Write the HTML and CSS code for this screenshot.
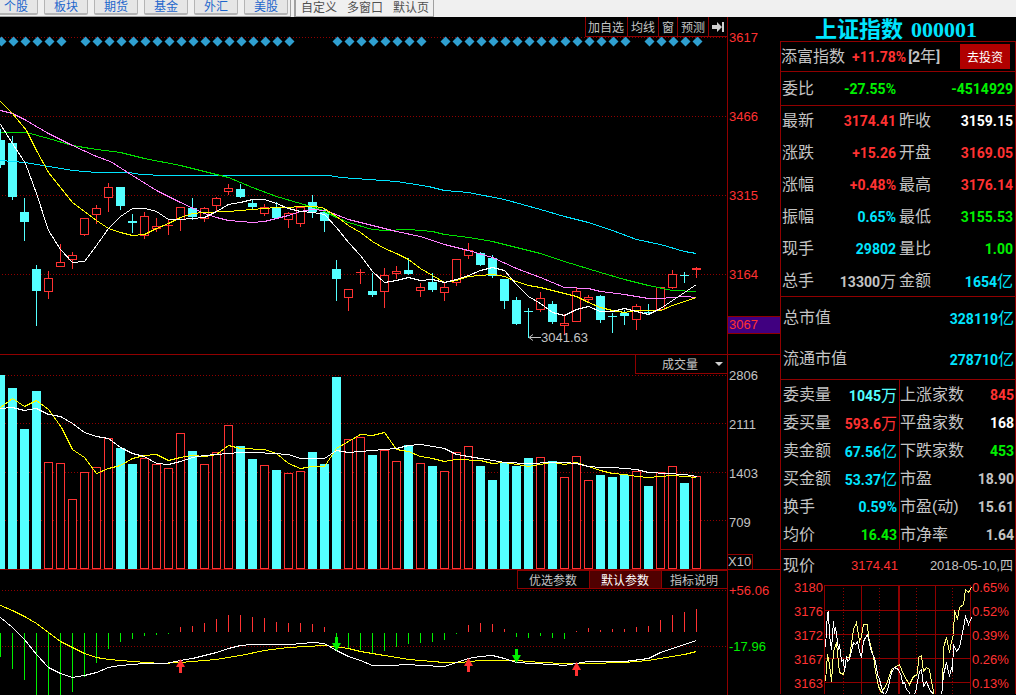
FILE: index.html
```html
<!DOCTYPE html>
<html lang="zh-CN">
<head>
<meta charset="utf-8">
<meta name="viewport" content="width=device-width, initial-scale=1">
<title>上证指数 000001</title>
<link rel="stylesheet" href="styles.css">
</head>
<body>
<header class="topbar">
  <nav class="markets">
    <button type="button">个股</button>
    <button type="button">板块</button>
    <button type="button">期货</button>
    <button type="button">基金</button>
    <button type="button">外汇</button>
    <button type="button">美股</button>
  </nav>
  <nav class="views">
    <a href="#custom">自定义</a>
    <a href="#multi">多窗口</a>
    <a href="#default">默认页</a>
  </nav>
</header>

<main class="workspace">
  <div class="charts">
    <section class="panel" aria-label="K线">
      <svg class="plot plot-price" id="price" viewBox="0 17 727 337" preserveAspectRatio="none"></svg>
      <div class="tools">
        <button type="button">加自选</button>
        <button type="button">均线</button>
        <button type="button">窗</button>
        <button type="button">预测</button>
        <button type="button" aria-label="移到最后">
          <svg class="tool-icon" viewBox="0 0 12 12"><path d="M0 4h5V1l5 5-5 5V8H0zM10 1h2v10h-2z" fill="#d0d0d0"/></svg>
        </button>
      </div>
      <ul class="axis axis-price">
        <li>3617</li>
        <li>3466</li>
        <li>3315</li>
        <li>3164</li>
        <li class="current">3067</li>
      </ul>
    </section>

    <section class="panel" aria-label="成交量">
      <svg class="plot plot-volume" id="volume" viewBox="0 355 727 214" preserveAspectRatio="none"></svg>
      <div class="indicator">
        <select aria-label="指标"><option>成交量</option></select>
        <svg class="caret" viewBox="0 0 8 4"><path d="M0 0h8L4 4z" fill="#d0d0d0"/></svg>
      </div>
      <div class="axis axis-volume">
        <ul>
          <li>2806</li>
          <li>2111</li>
          <li>1403</li>
          <li>709</li>
        </ul>
        <span class="unit">X10</span>
      </div>
    </section>

    <section class="panel panel-last" aria-label="MACD">
      <svg class="plot plot-macd" id="macd" viewBox="0 570 727 125" preserveAspectRatio="none"></svg>
      <div class="tabs">
        <button type="button">优选参数</button>
        <button type="button" class="active">默认参数</button>
        <button type="button">指标说明</button>
      </div>
      <ul class="axis axis-macd">
        <li>+56.06</li>
        <li class="down">-17.96</li>
      </ul>
    </section>
  </div>

  <aside class="sidebar">
    <h1><span>上证指数</span><span>000001</span></h1>
    <div class="details">
      <div class="fund">
        <span>添富指数</span>
        <b class="up">+11.78%</b>
        <span class="term"><b>[2</b>年<b>]</b></span>
        <button type="button">去投资</button>
      </div>

      <dl class="quotes ratio">
        <div><dt>委比</dt><dd class="down">-27.55%</dd></div>
        <div class="only"><dd class="down">-4514929</dd></div>
      </dl>

      <dl class="quotes">
        <div><dt>最新</dt><dd class="up">3174.41</dd></div>
        <div><dt>昨收</dt><dd class="even">3159.15</dd></div>
        <div><dt>涨跌</dt><dd class="up">+15.26</dd></div>
        <div><dt>开盘</dt><dd class="up">3169.05</dd></div>
        <div><dt>涨幅</dt><dd class="up">+0.48%</dd></div>
        <div><dt>最高</dt><dd class="up">3176.14</dd></div>
        <div><dt>振幅</dt><dd class="info">0.65%</dd></div>
        <div><dt>最低</dt><dd class="down">3155.53</dd></div>
        <div><dt>现手</dt><dd class="info">29802</dd></div>
        <div><dt>量比</dt><dd class="down">1.00</dd></div>
        <div><dt>总手</dt><dd>13300<i>万</i></dd></div>
        <div><dt>金额</dt><dd class="info">1654<i>亿</i></dd></div>
      </dl>

      <dl class="caps">
        <div><dt>总市值</dt><dd class="info">328119<i>亿</i></dd></div>
        <div><dt>流通市值</dt><dd class="info">278710<i>亿</i></dd></div>
      </dl>

      <dl class="stats">
        <div><dt>委卖量</dt><dd class="sell">1045<i>万</i></dd></div>
        <div><dt>上涨家数</dt><dd class="up">845</dd></div>
        <div><dt>委买量</dt><dd class="up">593.6<i>万</i></dd></div>
        <div><dt>平盘家数</dt><dd class="even">168</dd></div>
        <div><dt>卖金额</dt><dd class="info">67.56<i>亿</i></dd></div>
        <div><dt>下跌家数</dt><dd class="down">453</dd></div>
        <div><dt>买金额</dt><dd class="info">53.37<i>亿</i></dd></div>
        <div><dt>市盈</dt><dd>18.90</dd></div>
        <div><dt>换手</dt><dd class="info">0.59%</dd></div>
        <div><dt>市盈(动)</dt><dd>15.61</dd></div>
        <div><dt>均价</dt><dd class="down">16.43</dd></div>
        <div><dt>市净率</dt><dd>1.64</dd></div>
      </dl>

      <div class="session">
        <span class="session-name">现价</span>
        <span class="session-price">3174.41</span>
        <time datetime="2018-05-10">2018-05-10,四</time>
      </div>

      <div class="intraday">
        <ul class="levels">
          <li>3180</li><li>3176</li><li>3172</li><li>3167</li><li>3163</li>
        </ul>
        <svg class="mini" id="mini" viewBox="824 581 148 114" preserveAspectRatio="none"></svg>
        <ul class="levels percents">
          <li>0.65%</li><li>0.52%</li><li>0.39%</li><li>0.26%</li><li>0.13%</li>
        </ul>
      </div>
    </div>
  </aside>
</main>
<script src="charts.js"></script>
</body>
</html>
```

FILE: styles.css
```css
* {
  box-sizing: border-box;
}

body {
  margin: 0;
  background: #000;
  color: #c4c4c4;
  font-family: "Liberation Sans", "Noto Sans CJK SC", sans-serif;
  font-size: 13px;
  line-height: 16px;
}

ul,
dl,
dd,
h1 {
  margin: 0;
  padding: 0;
  list-style: none;
}

i {
  font-style: normal;
}

button,
select {
  margin: 0;
  padding: 0;
  border: 0;
  border-radius: 0;
  background: none;
  color: inherit;
  font-family: "Noto Sans CJK SC", sans-serif;
  font-size: 12px;
  line-height: 16px;
}

/* Top bar */

.topbar {
  display: flex;
  height: 17px;
  overflow: hidden;
  background: #f0f0f0;
}

.markets {
  display: flex;
  gap: 6px;
  padding-right: 2px;
  margin-left: -6px;
  border-right: 1px solid #a0a0a0;
  border-bottom: 1px solid #a0a0a0;
}

.markets button {
  width: 44px;
  height: 15px;
  padding-bottom: 2px;
  border: 1px solid #b4b4b4;
  border-width: 0 1px 2px;
  border-radius: 0 0 2px 2px;
  background: #e6e6e6;
  color: #1e66cc;
  line-height: 12px;
}

.views {
  display: flex;
  gap: 10px;
  margin-left: 3px;
  padding: 0 4px 0 5px;
  border-left: 2px solid #a0a0a0;
  border-right: 1px solid #a0a0a0;
  border-bottom: 1px solid #a0a0a0;
}

.views a {
  color: #505050;
  font-size: 12px;
  text-decoration: none;
}

/* Workspace */

.workspace {
  display: grid;
  grid-template-columns: minmax(0, 1fr) 236px;
}

.panel {
  position: relative;
  display: grid;
  grid-template-columns: minmax(0, 1fr) 53px;
  border-bottom: 1px solid #900000;
}

.panel-last {
  border-bottom: 0;
}

.plot {
  display: block;
  width: 100%;
}

.plot-price {
  height: 337px;
}

.plot-volume {
  height: 214px;
}

.plot-macd {
  height: 125px;
}

.plot text {
  fill: #c4c4c4;
  font-size: 13px;
}

.axis {
  padding-top: 13px;
  border-left: 1px solid #900000;
}

.axis li {
  padding-left: 1px;
}

.axis-price {
  color: #ff3232;
}

.axis-price li + li {
  margin-top: 63px;
}

.axis-price li.current {
  margin-top: 33px;
  border-top: 1px solid #900000;
  border-bottom: 1px solid #900000;
  background: #400080;
}

.axis-volume {
  display: flex;
  flex-direction: column;
  justify-content: space-between;
  align-items: flex-start;
}

.axis-volume ul {
  display: flex;
  flex-direction: column;
  gap: 33px;
}

.unit {
  padding-right: 1px;
  border: 1px solid #900000;
  border-width: 1px 1px 0 0;
  line-height: 14px;
}

.axis-macd {
  color: #ff3232;
}

.axis-macd li + li {
  margin-top: 40px;
}

.tools,
.indicator,
.tabs {
  position: absolute;
  top: 0;
  right: 53px;
  display: flex;
  border-bottom: 1px solid #900000;
  background: #000;
}

.tools button {
  padding: 0 3px;
  border-left: 1px solid #900000;
  line-height: 19px;
}

.tools button:first-child {
  padding-left: 2px;
}

.tool-icon {
  display: block;
  width: 12px;
  height: 12px;
}

.indicator {
  border-left: 1px solid #900000;
}

.indicator select {
  width: 91px;
  height: 18px;
  padding-left: 26px;
  appearance: none;
  background: #000;
}

.caret {
  position: absolute;
  top: 7px;
  right: 4px;
  width: 8px;
  height: 4px;
}

.tabs {
  border-top: 1px solid #900000;
}

.tabs button {
  padding: 0 12px 0 11px;
  border-left: 1px solid #900000;
  line-height: 17px;
}

.tabs button:last-child {
  padding: 0 9px 0 8px;
}

.tabs .active {
  background: #500000;
  color: #fff;
}

/* Sidebar */

.sidebar h1 {
  display: flex;
  justify-content: center;
  gap: 8px;
  height: 24px;
  padding-right: 4px;
  color: #00e5ff;
  font-family: "Liberation Serif", "Noto Sans CJK SC", serif;
  font-size: 22px;
  line-height: 26px;
  white-space: nowrap;
}

.details {
  border: 1px solid #900000;
  border-bottom: 0;
  font-size: 16px;
}

.details > * + * {
  border-top: 1px solid #900000;
}

.details b,
.details dd {
  font-family: Roboto, sans-serif;
  font-size: 14px;
  font-weight: bold;
}

.details dd i {
  font-family: "Noto Sans CJK SC", sans-serif;
  font-size: 16px;
  font-weight: normal;
}

.details .up,
.up {
  color: #ff3232;
}

.down {
  color: #00f000;
}

.info {
  color: #00e5ff;
}

.sell {
  color: #54ffff;
}

.even {
  color: #fff;
}

.fund {
  display: flex;
  align-items: center;
  height: 29px;
  padding-right: 5px;
}

.fund .up {
  margin: 0 2px 0 7px;
}

.fund button {
  width: 50px;
  height: 25px;
  margin-left: auto;
  background: #b00000;
  color: #fff;
}

.quotes,
.stats {
  display: grid;
  grid-template-columns: 1fr 1fr;
}

.quotes {
  grid-auto-rows: 32px;
  align-content: center;
  column-gap: 3px;
  height: 191px;
  padding: 0 2px 0 1px;
}

.quotes.ratio {
  height: 34px;
}

.quotes div,
.caps div,
.stats div {
  display: flex;
  justify-content: space-between;
  align-items: center;
  white-space: nowrap;
}

.quotes .only {
  justify-content: flex-end;
}

.caps {
  padding: 0 1px 0 2px;
}

.caps div {
  height: 41px;
}

.stats {
  grid-template-columns: 119fr 115fr;
}

.stats div {
  height: 28px;
  padding-right: 1px;
}

.stats div:nth-child(odd) {
  padding: 0 2px;
  border-right: 1px solid #900000;
}

.stats div:nth-child(-n+2) {
  height: 29px;
  padding-top: 1px;
}

.session {
  display: grid;
  grid-template-columns: 68px 1fr auto;
  align-items: center;
  height: 31px;
  padding: 1px 2px 0;
}

.session-price,
.session time {
  font-size: 13px;
}

.session-price {
  color: #ff3232;
}

.details .intraday {
  display: grid;
  grid-template-columns: 43px minmax(0, 1fr) 43px;
  border-top: 0;
}

.mini {
  display: block;
  width: 100%;
  height: 114px;
}

.levels {
  display: flex;
  flex-direction: column;
  gap: 8px;
  padding-right: 1px;
  color: #ff3232;
  font-size: 13px;
  text-align: right;
}

.percents {
  padding: 0;
  text-align: left;
}
```

FILE: charts.js
```js
const UP = '#ff3232', DOWN = '#54ffff', GREEN = '#00f000', GRID = '#900000';
const STEP = 12;

const rect = (x, y, w, h, fill) =>
  `<rect x="${x}" y="${y}" width="${w}" height="${h}" fill="${fill}"/>`;
const box = (x, y, w, h) =>
  `<rect x="${x + 0.5}" y="${y + 0.5}" width="${w - 1}" height="${h - 1}" fill="#000" stroke="${UP}"/>`;
const line = (points, color) =>
  `<polyline points="${points}" transform="translate(0.5 0.5)" fill="none" stroke="${color}" shape-rendering="crispEdges"/>`;
const dotted = (ys) => ys.map((y) =>
  `<path d="M2 ${y + 0.5}H727" stroke="${GRID}" stroke-dasharray="1 2"/>`).join('');

// direction, high, body top, body bottom, low, volume top, MACD bar end
const days = [
  ['d',129,140,165,168,375,657], ['d',136,143,197,200,388,669], ['d',198,212,222,241,429,680],
  ['d',265,269,291,326,391,695], ['u',271,278,292,299,462,695], ['u',244,262,267,267,463,695],
  ['u',252,255,260,269,499,692], ['u',218,218,235,236,472,677], ['u',205,208,215,224,467,663],
  ['u',183,187,198,212,438,649], ['d',187,187,206,210,448,642], ['d',214,221,223,233,464,639],
  ['u',212,216,236,239,458,636], ['u',218,226,229,232,464,635], ['u',219,225,226,235,468,634],
  ['u',207,207,220,231,433,627], ['d',198,208,217,220,451,626], ['u',207,208,219,222,464,623],
  ['u',197,198,206,211,452,619], ['u',184,188,192,195,425,615], ['d',184,189,197,198,446,615],
  ['d',200,203,207,209,459,617], ['u',204,207,214,216,465,618], ['d',202,207,218,218,470,622],
  ['u',212,213,220,228,473,623], ['u',207,207,224,227,471,623], ['d',195,202,212,218,452,624],
  ['d',209,212,221,232,464,627], ['d',260,269,279,301,377,640], ['u',289,289,298,311,439,648],
  ['u',269,272,273,284,437,650], ['d',273,291,295,297,455,653], ['u',268,275,292,308,450,651],
  ['u',266,271,274,279,461,647], ['d',258,270,274,275,445,644], ['u',283,287,291,297,463,643],
  ['d',273,282,290,292,466,642], ['u',283,287,293,301,471,640], ['u',259,259,283,286,452,634],
  ['u',243,250,256,259,446,625], ['d',252,253,265,266,466,623], ['d',255,258,276,278,480,624],
  ['d',279,279,301,309,462,629], ['d',297,300,324,325,466,637], ['d',308,311,312,338,458,638],
  ['u',292,298,310,312,457,636], ['d',301,304,322,324,461,638], ['u',314,323,326,335,477,639],
  ['u',288,291,322,322,456,631], ['u',295,297,300,303,480,628], ['d',295,296,320,323,475,630],
  ['d',313,316,317,333,477,629], ['d',310,313,316,325,475,629], ['u',304,306,320,330,471,627],
  ['d',304,312,313,314,486,626], ['u',287,287,310,311,472,620], ['u',270,274,288,289,466,615],
  ['d',272,275,276,283,483,612], ['u',267,268,270,278,476,609],
];

function drawPrice() {
  let out = dotted([37, 116, 195, 274]);
  const gaps = [6, 25, 26, 27, 36, 53];
  days.forEach((d, i) => {
    if (!gaps.includes(i)) {
      const x = i * STEP + 1.5;
      out += `<path d="M${x - 5} 41.5l5-5 5 5-5 5z" fill="#2f9fd0"/>`;
    }
  });
  days.forEach(([dir, high, top, bottom, low], i) => {
    const x = i * STEP, h = bottom - top;
    out += rect(x, high, 1, low - high, dir === 'u' ? UP : DOWN);
    if (dir === 'd') out += rect(x - 4, top, 9, h, DOWN);
    else if (h < 3) out += rect(x - 4, top, 9, h, UP);
    else out += box(x - 4, top, 9, h);
  });
  out += line('0,160 24,162 48,166 72,170 96,172 128,172 140,174 165,175 328,175 340,177 396,181 428,186 444,190 468,192 504,199 540,209 564,216 588,222 612,230 636,239 660,244 684,251 696,253', '#00e5ff');
  out += line('0,132 26,132 48,138 72,145 96,149 120,152 144,158 180,165 228,177 252,187 276,196 300,203 320,209 336,217 348,222 372,229 384,230 408,229 432,231 444,234 468,237 492,241 516,247 540,253 564,261 600,272 624,279 648,285 672,290 696,291', '#00e000');
  out += line('0,110 12,113 24,119 48,133 72,145 96,156 110,161 132,175 156,190 180,202 204,213 216,217 228,220 252,222 264,221 276,218 288,215 300,211 312,209 325,210 348,219 372,225 396,231 420,236 444,244 468,250 492,257 516,268 540,277 564,287 588,288 600,291 624,294 648,298 660,298 684,296 696,297', '#ff80ff');
  out += line('0,101 12,113 26,130 36,150 48,172 60,187 72,202 84,211 96,220 108,228 120,232 132,235 144,234 156,228 168,223 180,217 192,213 204,212 228,211 240,210 264,208 276,207 312,206 322,207 336,216 348,225 360,232 372,241 384,248 396,253 408,259 420,268 432,275 444,282 456,280 468,276 480,275 492,274 504,276 516,281 528,285 540,287 552,290 564,293 576,296 588,302 600,307 612,310 624,312 636,310 660,310 672,305 684,301 696,297', '#ffff00');
  out += line('0,124 12,143 25,163 36,193 48,230 60,249 72,262 84,261 96,245 108,228 120,216 132,208 145,208 156,211 168,219 180,219 192,218 204,217 216,211 228,204 240,202 252,199 264,199 276,203 288,208 300,211 312,212 324,214 336,227 348,242 360,255 372,271 384,282 396,280 408,277 420,280 432,279 444,282 456,279 468,275 480,270 492,267 504,270 516,284 528,296 540,303 552,312 564,315 576,309 588,306 600,311 612,311 624,308 636,311 648,314 660,308 672,300 684,292 696,284', '#ffffff');
  out += '<path d="M541 337.5H530M533 334.5l-4 3 4 3" fill="none" stroke="#c4c4c4"/>';
  out += '<text x="541" y="342">3041.63</text>';
  document.getElementById('price').innerHTML = out;
}

function drawVolume() {
  let out = dotted([375, 423, 472, 520]);
  days.forEach((d, i) => {
    const x = i * STEP - 4, h = 569 - d[5];
    out += d[0] === 'd' ? rect(x, d[5], 9, h, DOWN) : box(x, d[5], 9, h);
  });
  out += line('0,407 12,398 24,406 36,400 48,409 61,427 72,449 84,457 96,473 108,468 120,465 132,458 144,455 156,454 168,460 180,457 192,455 204,456 216,454 228,445 240,448 264,449 276,453 288,463 300,468 312,466 324,466 336,448 348,441 360,434 372,435 384,432 396,449 408,451 420,456 432,458 444,461 456,459 480,460 492,463 504,462 516,464 528,466 540,464 552,462 564,464 576,462 588,466 600,470 612,473 624,474 636,476 648,477 672,475 684,476 696,477', '#ffff00');
  out += line('0,408 12,407 24,410 36,408 48,414 60,416 72,423 84,432 96,436 108,438 120,447 132,453 144,456 156,463 168,464 180,461 192,457 204,455 228,453 240,452 256,452 288,454 300,458 324,458 336,450 348,452 372,450 396,448 408,445 420,444 432,446 444,448 456,454 480,458 492,460 504,462 528,463 552,462 564,462 576,463 588,466 600,467 612,467 636,469 648,472 684,474 697,476', '#ffffff');
  document.getElementById('volume').innerHTML = out;
}

function drawMacd() {
  const arrow = (x, y, up) => up
    ? `<path d="M${x + 0.5} ${y}l4.5 8h-3v6h-3v-6h-3z" fill="${UP}"/>`
    : `<path d="M${x + 0.5} ${y + 14}l4.5-8h-3v-6h-3v6h-3z" fill="${GREEN}"/>`;
  let out = dotted([590, 646]);
  days.forEach((d, i) => {
    const x = i * STEP, end = d[6];
    out += end > 632 ? rect(x, 633, 1, end - 633, GREEN) : rect(x, end, 1, 632 - end, UP);
  });
  out += line('0,605 12,610 24,616 36,623 48,632 60,641 72,647 84,653 96,657 108,659 132,661 160,663 180,662 216,659 240,655 264,650 288,647 324,645 348,648 360,651 384,655 408,659 444,662 460,662 480,660 516,660 540,662 564,663 588,663 624,662 648,660 672,656 684,654 696,651', '#ffff00');
  out += line('0,617 12,627 24,639 36,654 48,667 60,673 72,677 84,675 96,672 108,667 120,665 144,663 165,663 180,660 192,658 204,655 216,652 228,648 240,645 252,644 290,644 312,642 324,643 336,650 348,656 360,660 372,665 390,665 408,664 420,665 444,666 456,662 468,658 480,656 492,655 504,658 516,662 532,663 552,664 564,665 576,663 588,661 624,661 648,658 660,652 672,648 684,644 696,640', '#ffffff');
  out += arrow(180, 659, true) + arrow(336, 637, false) + arrow(468, 658, true)
    + arrow(516, 649, false) + arrow(576, 662, true);
  document.getElementById('macd').innerHTML = out;
}

function drawMini() {
  let out = '';
  [586, 611, 635, 659, 683].forEach((y) => { out += rect(824, y, 147, 1, GRID); });
  [824, 861, 935, 970].forEach((x) => { out += rect(x, 586, 1, 109, GRID); });
  out += rect(898, 586, 2, 109, GRID);
  [843, 879, 916, 952].forEach((x) => {
    out += `<path d="M${x + 0.5} 589V695" stroke="${GRID}" stroke-dasharray="1 2"/>`;
  });
  out += line('825,682 827,655 829,665 831,682 833,652 836,643 839,673 843,675 846,658 849,658 853,630 856,623 859,642 861,637 863,625 867,625 868,638 873,657 875,672 878,687 881,693 886,685 891,670 899,665 903,675 909,685 913,677 917,675 918,658 921,656 923,672 926,668 929,670 931,682 934,697 938,702 942,690 943,648 946,638 949,653 951,642 953,635 954,611 957,620 959,608 963,605 965,590 968,593 971,588', '#ffff80');
  out += line('825,648 827,613 828,612 829,636 831,650 833,622 834,634 835,628 837,642 838,650 839,645 841,662 843,660 844,672 846,657 847,662 849,660 853,643 855,645 857,642 859,652 861,658 863,642 865,638 867,635 871,653 873,656 875,662 877,675 879,680 881,688 884,698 888,687 891,673 894,668 898,670 901,677 902,684 904,683 906,690 908,692 912,698 915,693 918,677 919,672 921,670 923,687 926,682 929,690 933,695 938,700 941,697 943,675 946,663 949,677 951,668 952,672 953,645 956,652 959,648 961,638 963,628 965,617 968,625 971,618', '#ffffff');
  document.getElementById('mini').innerHTML = out;
}

drawPrice();
drawVolume();
drawMacd();
drawMini();
```
